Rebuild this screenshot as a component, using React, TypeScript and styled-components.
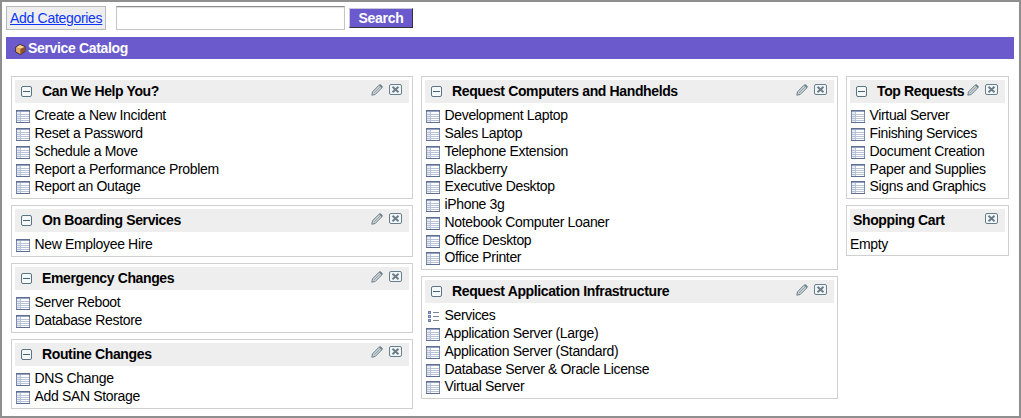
import React from 'react';
import styled, { createGlobalStyle } from 'styled-components';

const GlobalStyle = createGlobalStyle`
  * { box-sizing: border-box; }
  body { margin: 0; background: #fff; }
`;

const Frame = styled.div`
  width: 1021px;
  height: 418px;
  border: 2px solid #8f8f8f;
  padding: 4px 5px 0 4px;
  background: #fff;
  color: #000;
  font: 14px/17.75px "Liberation Sans", Arial, sans-serif;
  letter-spacing: -0.34px;
  overflow: hidden;
`;

const Toolbar = styled.div`
  display: flex;
  height: 24px;
`;

const AddBox = styled.div`
  width: 100px;
  height: 24px;
  border: 1px solid #b9b9b9;
  background: #eee;
  padding: 3px 0 0 3px;
  white-space: nowrap;
`;

const AddLink = styled.a`
  color: #0b35f5;
  letter-spacing: -0.3px;
  text-decoration: underline;
`;

const SearchInput = styled.input`
  width: 229px;
  height: 24px;
  margin: 0 4px 0 10px;
  padding: 0 4px;
  border: 1px solid #c4c4c4;
  border-top-color: #8a8a8a;
  border-radius: 0;
  box-shadow: inset 0 1px 1px #ddd;
  background: #fff;
  outline: none;
`;

const SearchButton = styled.button`
  width: 64px;
  height: 20px;
  margin-top: 2px;
  padding: 0;
  border: 1px solid;
  border-color: #c8c8dc #333 #333 #c8c8dc;
  background: #6a5acd;
  color: #fff;
  font: bold 14px/17px "Liberation Sans", Arial, sans-serif;
  letter-spacing: -0.3px;
`;

const TitleBar = styled.div`
  display: flex;
  align-items: center;
  width: 1008px;
  height: 22px;
  margin-top: 7px;
  padding: 2px 0 0 9px;
  background: #6a5acb;
  color: #fff;
  font-weight: bold;
  svg { margin: 0 2px 0 0; }
`;

const Columns = styled.div`
  display: grid;
  grid-template-columns: 402px 417px 163px;
  column-gap: 8px;
  align-items: start;
  padding: 17px 0 0 5px;
`;

const Column = styled.div`
  display: flex;
  flex-direction: column;
  gap: 6px;
`;

const Panel = styled.section`
  border: 1px solid #d0d0d0;
  padding: 3px;
`;

const PanelHeader = styled.header<{ $plain?: boolean }>`
  display: flex;
  align-items: center;
  height: 23px;
  background: #eee;
  padding: 0 7px 0 ${p => (p.$plain ? 3 : 6)}px;
`;

const PanelTitle = styled.h2<{ $plain?: boolean }>`
  flex: 1;
  margin: 0 0 0 ${p => (p.$plain ? 0 : 10)}px;
  font-size: 14px;
  font-weight: bold;
  letter-spacing: -0.37px;
  line-height: 23px;
  white-space: nowrap;
`;

const Tools = styled.span`
  display: flex;
  flex: none;
  gap: 6px;
  margin-top: -4px;
`;

const List = styled.ul`
  list-style: none;
  margin: 0;
  padding: 3.25px 0 0 1px;
`;

const Item = styled.li`
  display: flex;
  height: 17.75px;
  line-height: 18.75px;
  white-space: nowrap;
  svg { flex: none; margin: 4px 4.5px 0 0; }
`;

const CartText = styled.p`
  margin: 0;
  padding-top: 3.25px;
  height: 20px;
  line-height: 18.75px;
`;

const TableIcon = () => (
  <svg width="14" height="13" viewBox="0 0 14 13" shapeRendering="crispEdges">
    <path fill="#fff" d="M0 0h14v13H0z" />
    <path fill="#5e6e92" d="M0 0h14v2H0z" />
    <path fill="#95a3c0" d="M1 1h12v1H1z" />
    <path fill="#e6ebf5" d="M1 2h3v10H1z" />
    <path fill="#b8c2d6" d="M1 4h12v1H1zM1 6h12v1H1zM1 8h12v1H1zM1 10h12v1H1zM4 2h1v10H4z" />
    <path fill="#7d8bad" d="M0 2h1v10H0zM13 2h1v10h-1z" />
    <path fill="#5e6e92" d="M0 12h14v1H0z" />
  </svg>
);

const ServicesIcon = () => (
  <svg width="14" height="13" viewBox="0 0 14 13" shapeRendering="crispEdges">
    <path fill="#6d7fae" d="M2 1h3v3H2zM2 5h3v3H2zM2 9h3v3H2z" />
    <path fill="#a9b7dc" d="M3 2h1v1H3zM3 6h1v1H3zM3 10h1v1H3z" />
    <path fill="#7d8590" d="M7 2h6v1H7zM7 6h6v1H7zM7 10h6v1H7z" />
  </svg>
);

const CollapseIcon = () => (
  <svg width="11" height="11" viewBox="0 0 11 11">
    <rect x=".5" y=".5" width="10" height="10" rx="1.5" fill="#f6f9fa" stroke="#587586" />
    <path d="M2 5.5h7" stroke="#456477" />
  </svg>
);

const PencilIcon = () => (
  <svg width="12" height="12" viewBox="0 0 12 12">
    <path d="M.8 11.2 1.5 7.8 7.9 1.3Q9 .3 10.1 1.2L10.8 1.9Q11.7 2.9 10.7 4L4.2 10.5Z" fill="#c9d1d5" stroke="#6f818b" />
    <path d="m2.8 9.2 6-6" fill="none" stroke="#93a1a8" strokeWidth=".9" />
    <path d="m8.1 1.5 1.2-1 2.2 2.2-1 1.2z" fill="#6f818b" />
  </svg>
);

const CloseIcon = () => (
  <svg width="13" height="11" viewBox="0 0 13 11">
    <rect x=".5" y=".5" width="12" height="10" rx="1.5" fill="#f3f6f7" stroke="#657f8f" />
    <path d="m3.5 2.8 6 5.4M9.5 2.8l-6 5.4" stroke="#6b7d89" strokeWidth="2" />
  </svg>
);

const BoxIcon = () => (
  <svg width="11" height="11" viewBox="0 0 11 11">
    <path d="M5 .5 10 2.6V7.4L5.5 10.5 .7 8V3z" fill="#b87738" stroke="#38220f" strokeWidth=".8" />
    <path d="M5.1 1 9.4 2.9 5.4 4.8 1.2 3.2z" fill="#f8d69d" />
    <path d="M1.1 3.5 5.3 5.1V9.9L1.1 7.6z" fill="#e2aa68" />
    <path d="M5.6 5.1 9.7 3.2V7.2L5.6 9.9z" fill="#8d5425" />
  </svg>
);

type PanelData = { title: string; items: string[] };

const columns: PanelData[][] = [
  [
    { title: 'Can We Help You?', items: ['Create a New Incident', 'Reset a Password', 'Schedule a Move', 'Report a Performance Problem', 'Report an Outage'] },
    { title: 'On Boarding Services', items: ['New Employee Hire'] },
    { title: 'Emergency Changes', items: ['Server Reboot', 'Database Restore'] },
    { title: 'Routine Changes', items: ['DNS Change', 'Add SAN Storage'] },
  ],
  [
    { title: 'Request Computers and Handhelds', items: ['Development Laptop', 'Sales Laptop', 'Telephone Extension', 'Blackberry', 'Executive Desktop', 'iPhone 3g', 'Notebook Computer Loaner', 'Office Desktop', 'Office Printer'] },
    { title: 'Request Application Infrastructure', items: ['Services', 'Application Server (Large)', 'Application Server (Standard)', 'Database Server & Oracle License', 'Virtual Server'] },
  ],
  [
    { title: 'Top Requests', items: ['Virtual Server', 'Finishing Services', 'Document Creation', 'Paper and Supplies', 'Signs and Graphics'] },
  ],
];

const CatalogPanel = ({ title, items }: PanelData) => (
  <Panel>
    <PanelHeader>
      <CollapseIcon />
      <PanelTitle>{title}</PanelTitle>
      <Tools><PencilIcon /><CloseIcon /></Tools>
    </PanelHeader>
    <List>
      {items.map(item => (
        <Item key={item}>
          {item === 'Services' ? <ServicesIcon /> : <TableIcon />}
          {item}
        </Item>
      ))}
    </List>
  </Panel>
);

export default function App() {
  return (
    <Frame>
      <GlobalStyle />
      <Toolbar>
        <AddBox><AddLink href="#">Add Categories</AddLink></AddBox>
        <SearchInput aria-label="Search catalog" />
        <SearchButton>Search</SearchButton>
      </Toolbar>
      <TitleBar><BoxIcon />Service Catalog</TitleBar>
      <Columns>
        {columns.map((panels, i) => (
          <Column key={i}>
            {panels.map(p => <CatalogPanel key={p.title} {...p} />)}
            {i === 2 && (
              <Panel>
                <PanelHeader $plain>
                  <PanelTitle $plain>Shopping Cart</PanelTitle>
                  <Tools><CloseIcon /></Tools>
                </PanelHeader>
                <CartText>Empty</CartText>
              </Panel>
            )}
          </Column>
        ))}
      </Columns>
    </Frame>
  );
}
